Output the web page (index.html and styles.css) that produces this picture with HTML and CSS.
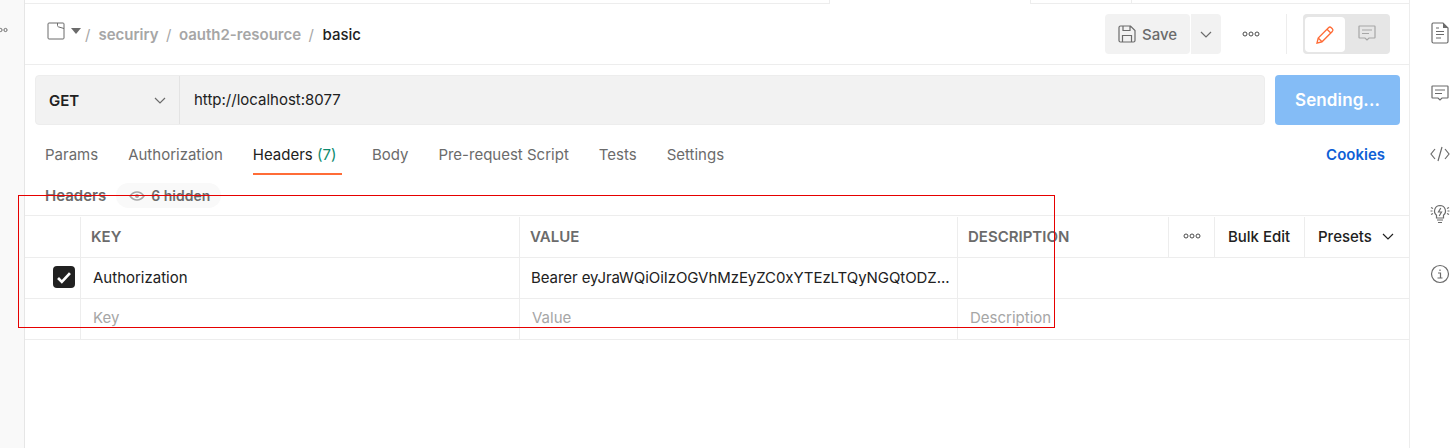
FILE: index.html
```html
<!DOCTYPE html>
<html lang="en">
<head>
<meta charset="utf-8">
<title>basic</title>
<link rel="stylesheet" href="styles.css">
</head>
<body>
<div class="app">
  <aside class="rail-left">
    <svg class="rail-dots" width="8" height="6" viewBox="0 0 8 6"><circle cx="0.5" cy="3" r="1.6"/><circle cx="5.5" cy="3" r="1.6"/></svg>
  </aside>
  <main class="main">
    <div class="tabstrip"><span class="tab-active"></span><span class="tab-next"></span></div>
    <header class="crumbs">
      <div class="path">
        <svg class="coll-icon" width="20" height="20" viewBox="0 0 20 20"><path d="M3 2h14a1 1 0 0 1 1 1v14a1 1 0 0 1-1 1H3a1 1 0 0 1-1-1V3a1 1 0 0 1 1-1zM11.500 2v2.500a1.500 1.500 0 0 0 1 1.400L18 7.500"/></svg>
        <svg class="caret" width="10" height="6" viewBox="0 0 10 6"><path d="M0 0h10L5 6z"/></svg>
        <span class="sep first">/</span><span class="crumb">securiry</span><span class="sep">/</span><span class="crumb">oauth2-resource</span><span class="sep">/</span><span class="crumb-current">basic</span>
      </div>
      <div class="actions">
        <div class="save-btn">
          <svg class="save-icon" width="18" height="18" viewBox="0 0 18 18"><path d="M2.500 1h10L17 5.500V15.500a1.500 1.500 0 0 1-1.500 1.500h-13A1.500 1.500 0 0 1 1 15.500v-13A1.500 1.500 0 0 1 2.500 1zM5 1v4.500h7V1M4.500 17v-6.500h9V17"/></svg>
          <span>Save</span>
        </div>
        <div class="save-more">
          <svg class="chev" width="12" height="7" viewBox="0 0 12 7"><path d="M1 1l5 5 5-5"/></svg>
        </div>
        <svg class="dots head-dots" width="18" height="6" viewBox="0 0 18 6"><circle cx="3" cy="3" r="2"/><circle cx="9" cy="3" r="2"/><circle cx="15" cy="3" r="2"/></svg>
        <span class="vline"></span>
        <div class="mode">
          <div class="mode-on">
            <svg width="20" height="20" viewBox="0 0 20 20"><path class="pencil" d="M2 18l1.200-5L13.500 2.700a2 2 0 0 1 2.800 0l1 1a2 2 0 0 1 0 2.800L7 16.800zM3.200 13L7 16.800M12 4.200l3.800 3.800"/></svg>
          </div>
          <div class="mode-off">
            <svg width="18" height="18" viewBox="0 0 18 18"><path class="comment" d="M1.500 1h15a.5.5 0 0 1 .5.500v11a.5.5 0 0 1-.5.500H11l-2 2-2-2H1.500a.5.5 0 0 1-.5-.500v-11a.5.5 0 0 1 .5-.500zM4 5h10M4 8.500h7"/></svg>
          </div>
        </div>
      </div>
    </header>
    <section class="urlbar">
      <div class="url-group">
        <div class="method"><span>GET</span><svg class="chev" width="12" height="7" viewBox="0 0 12 7"><path d="M1 1l5 5 5-5"/></svg></div>
        <div class="url">http://localhost:8077</div>
      </div>
      <button class="send">Sending...</button>
    </section>
    <nav class="tabs">
      <span class="tab">Params</span>
      <span class="tab">Authorization</span>
      <span class="tab active">Headers <em>(7)</em></span>
      <span class="tab">Body</span>
      <span class="tab">Pre-request Script</span>
      <span class="tab">Tests</span>
      <span class="tab">Settings</span>
      <span class="cookies">Cookies</span>
    </nav>
    <div class="subhead">
      <span class="subhead-title">Headers</span>
      <span class="hidden-pill">
        <svg width="16" height="10" viewBox="0 0 16 10"><path class="eye" d="M1 5c2-2.700 4.300-4 7-4s5 1.300 7 4c-2 2.700-4.300 4-7 4s-5-1.300-7-4z"/><circle class="eye-dot" cx="8" cy="5" r="2"/></svg>
        6 hidden
      </span>
    </div>
    <div class="table">
      <div class="row row-head">
        <div class="cell c-check"></div>
        <div class="cell c-key th">KEY</div>
        <div class="cell c-val th">VALUE</div>
        <div class="cell c-desc th">DESCRIPTION</div>
        <div class="cell c-dots"><svg class="dots" width="18" height="6" viewBox="0 0 18 6"><circle cx="3" cy="3" r="2"/><circle cx="9" cy="3" r="2"/><circle cx="15" cy="3" r="2"/></svg></div>
        <div class="cell c-bulk">Bulk Edit</div>
        <div class="cell c-presets">Presets <svg class="chev dark" width="12" height="7" viewBox="0 0 12 7"><path d="M1 1l5 5 5-5"/></svg></div>
      </div>
      <div class="row row-data">
        <div class="cell c-check"><span class="checkbox"><svg width="16" height="13" viewBox="0 0 14 12"><path d="M1.500 6.500l3.500 3.500 7.500-8"/></svg></span></div>
        <div class="cell c-key">Authorization</div>
        <div class="cell c-val bearer">Bearer eyJraWQiOiIzOGVhMzEyZC0xYTEzLTQyNGQtODZ...</div>
        <div class="cell c-desc c-wide"></div>
      </div>
      <div class="row row-last">
        <div class="cell c-check"></div>
        <div class="cell c-key ph">Key</div>
        <div class="cell c-val ph">Value</div>
        <div class="cell c-desc c-wide ph">Description</div>
      </div>
    </div>
  </main>
  <aside class="rail-right">
    <svg width="18" height="22" viewBox="0 0 18 22"><path class="fold" d="M12 1l5 5h-5z"/><path d="M2 1h10l5 5v13.500a1.500 1.500 0 0 1-1.500 1.500h-13A1.500 1.500 0 0 1 1 19.500v-17A1.500 1.500 0 0 1 2 1zM5 6h3M5 9.500h8M5 12.500h8M5 16h5"/></svg>
    <svg width="18" height="18" viewBox="0 0 18 18"><path d="M1.500 1h15a.5.5 0 0 1 .5.500v11a.5.5 0 0 1-.5.500H11l-2 2-2-2H1.500a.5.5 0 0 1-.5-.500v-11a.5.5 0 0 1 .5-.500zM4 5h10M4 8.500h7"/></svg>
    <svg width="20" height="16" viewBox="0 0 20 16"><path d="M5 3L1 8l4 5M15 3l4 5-4 5M12 1L8 15"/></svg>
    <svg width="20" height="20" viewBox="0 0 20 20"><path d="M10 1.500a5.500 5.500 0 0 1 3.500 9.700V14h-7v-2.800A5.500 5.500 0 0 1 10 1.500zM7 16h6M8 18.500h4M10.800 4L8.500 8h3l-2.300 4M1 3.500l2 1M1 10.500l2-1M19 3.500l-2 1M19 10.500l-2-1M.5 7h2M17.500 7h2"/></svg>
    <svg width="20" height="20" viewBox="0 0 20 20"><circle cx="10" cy="10" r="8.500"/><path d="M8 9h2.500v5M7.500 14h5M10 5.500v1.500"/></svg>
  </aside>
</div>
<div class="annotation"></div>
</body>
</html>
```
FILE: styles.css
```css
* { box-sizing: border-box; }
html, body { margin: 0; padding: 0; background: #fff; }
body { font-family: Inter, "Liberation Sans", sans-serif; font-size: 15px; color: #212121; height: 448px; overflow: hidden; position: relative; }
svg { display: block; flex: none; }
.app { display: flex; height: 448px; }

.rail-left { width: 25px; flex: none; background: #f9f9f9; border-right: 1px solid #e6e6e6; padding-top: 27px; }
.rail-dots { fill: none; stroke: #6b6b6b; stroke-width: 1; }

.main { width: 1385px; flex: none; border-right: 1px solid #ededed; }
.tabstrip { height: 4px; border-bottom: 1px solid #ededed; position: relative; }
.tab-active { position: absolute; left: 804px; width: 202px; top: 0; height: 4px; background: #fff; border-left: 1px solid #ededed; border-right: 1px solid #ededed; }
.tab-next { position: absolute; left: 1106px; width: 1px; top: 0; height: 3px; background: #ededed; }

.crumbs { height: 61px; border-bottom: 1px solid #ededed; display: flex; align-items: center; justify-content: space-between; padding: 0 19px 0 21px; }
.path { display: flex; align-items: center; font-size: 15px; font-weight: 600; color: #a6a6a6; }
.coll-icon { fill: none; stroke: #6b6b6b; stroke-width: 1; margin-right: 5px; margin-top: -6px; }
.caret { fill: #6b6b6b; margin-right: 4px; margin-top: -7px; }
.sep { margin: 0 7.500px; color: #a6a6a6; font-weight: 400; }
.sep.first { margin: 0 8px 0 0; }
.crumb { color: #a6a6a6; }
.crumb-current { color: #212121; font-weight: 500; margin-left: 1px; }

.actions { display: flex; align-items: center; }
.save-btn { width: 85px; height: 40px; background: #f2f2f2; border-radius: 4px; display: flex; align-items: center; gap: 6px; padding-left: 13px; font-size: 15px; font-weight: 500; color: #6b6b6b; }
.save-icon { fill: none; stroke: #6b6b6b; stroke-width: 1.200; }
.save-more { width: 30px; height: 40px; margin-left: 1px; background: #f2f2f2; border-radius: 0 4px 4px 0; display: flex; align-items: center; justify-content: center; }
.chev { fill: none; stroke: #6b6b6b; stroke-width: 1.200; }
.chev.dark { stroke: #212121; }
.dots { fill: none; stroke: #4a4a4a; stroke-width: 1; }
.head-dots { margin-left: 21px; }
.vline { width: 1px; height: 40px; background: #ededed; margin: 0 16px 0 26px; }
.mode { width: 87px; height: 40px; background: #e6e6e6; border-radius: 4px; padding: 3px 2px; display: flex; }
.mode-on { width: 40px; height: 35px; background: #fff; border-radius: 4px; display: flex; align-items: center; justify-content: center; }
.mode-off { flex: 1; display: flex; align-items: center; justify-content: center; }
.pencil { fill: none; stroke: #ff6c37; stroke-width: 1.300; }
.comment { fill: none; stroke: #a6a6a6; stroke-width: 1.200; }

.urlbar { display: flex; padding: 10px 9px 0 10px; gap: 10px; height: 60px; }
.url-group { flex: 1; height: 50px; background: #f2f2f2; border: 1px solid #ededed; border-radius: 4px; display: flex; align-items: center; }
.method { width: 144px; height: 100%; border-right: 1px solid #e3e3e3; display: flex; align-items: center; justify-content: space-between; padding: 0 13px 0 13px; font-weight: 600; color: #212121; }
.url { padding-left: 14px; color: #212121; margin-top: -2px; }
.send { width: 125px; height: 50px; background: #84bcf6; border: 0; border-radius: 4px; color: #fff; font: 600 17px Inter, "Liberation Sans", sans-serif; padding: 0; letter-spacing: 0.1px; }

.tabs { height: 50px; display: flex; align-items: flex-start; padding: 0 24px 0 20px; gap: 30px; }
.tab { height: 50px; padding-top: 20px; color: #6b6b6b; line-height: 19px; }
.tab.active { color: #212121; padding-right: 5.500px; border-bottom: 2px solid #ff6c37; }
.tab em { font-style: normal; color: #0c8a6e; }
.cookies { margin-left: auto; padding-top: 20px; line-height: 19px; color: #0f5fd6; font-weight: 600; }

.subhead { display: flex; align-items: center; gap: 10px; height: 25px; padding-left: 20px; margin-top: 8px; }
.subhead-title { font-weight: 600; font-size: 15px; color: #6b6b6b; }
.hidden-pill { display: flex; align-items: center; gap: 6px; height: 25px; padding: 0 11px 0 13px; border-radius: 13px; background: #f9f9f9; font-size: 14px; font-weight: 600; color: #6b6b6b; }
.eye { fill: none; stroke: #a6a6a6; stroke-width: 1.500; }
.eye-dot { fill: #a6a6a6; }

.table { margin-top: 7px; border-top: 1px solid #ededed; }
.row { display: flex; height: 41px; border-bottom: 1px solid #ededed; }
.cell { display: flex; align-items: center; border-right: 1px solid #ededed; flex: none; padding-left: 12px; }
.row-head .cell { margin-top: 1px; padding-bottom: 2px; }
.row-data .cell { padding-bottom: 2px; }
.row-last .cell { padding-bottom: 3px; }
.row-head { height: 42px; }
.c-check { width: 56px; padding-left: 0; justify-content: flex-end; padding-right: 5px; }
.c-key { width: 439px; }
.c-val { width: 438px; }
.bearer { padding-left: 11px; letter-spacing: -0.07px; }
.c-desc { width: 211px; }
.c-wide { flex: 1; border-right: 0; }
.c-dots { width: 46px; justify-content: center; padding-left: 0; }
.c-bulk { width: 90px; justify-content: center; padding-left: 0; padding-right: 1px; font-weight: 500; color: #212121; }
.c-presets { flex: 1; border-right: 0; padding-left: 13px; gap: 10px; font-weight: 500; color: #212121; }
.th { font-weight: 600; color: #6b6b6b; padding-left: 10px; }
.ph { color: #a6a6a6; }
.checkbox { width: 22px; height: 22px; background: #212121; border-radius: 4px; display: flex; align-items: center; justify-content: center; }
.checkbox svg { fill: none; stroke: #fff; stroke-width: 2.500; }

.rail-right { flex: 1; display: flex; flex-direction: column; align-items: center; padding: 22px 0 0 17px; }
.rail-right svg { fill: none; stroke: #6b6b6b; stroke-width: 1.200; }
.rail-right .fold { fill: #6b6b6b; stroke: none; }
.rail-right svg:nth-child(1) { margin-bottom: 41px; }
.rail-right svg:nth-child(2) { margin-bottom: 43px; }
.rail-right svg:nth-child(3) { margin-bottom: 42px; }
.rail-right svg:nth-child(4) { margin-bottom: 40px; }

.annotation { position: absolute; left: 18px; top: 195px; width: 1037px; height: 133px; border: 1px solid #e60000; }
```
